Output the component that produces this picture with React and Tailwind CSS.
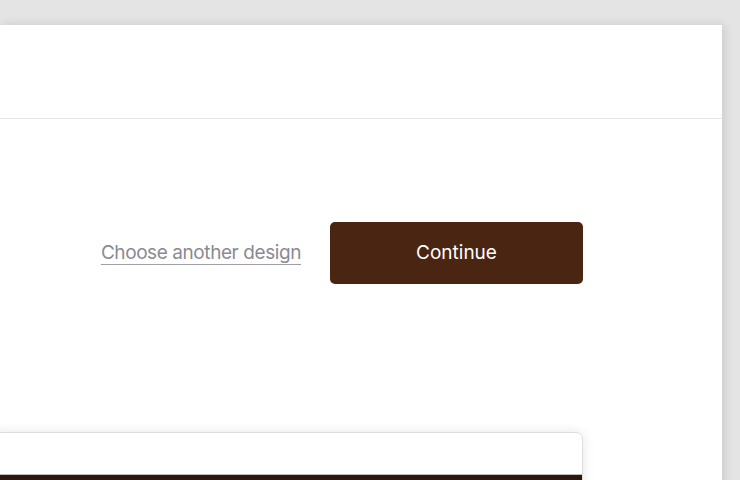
import React from 'react';

export default function App() {
  return (
    <div className="h-[480px] w-[740px] overflow-hidden bg-[#e4e4e4] pt-[25px] font-['Inter',sans-serif]">
      <div className="h-[500px] w-[722px] bg-white shadow-[2px_0_10px_rgba(0,0,0,0.12)]">
        {/* header */}
        <div className="h-[94px] border-b border-[#e6e6e6]" />

        {/* actions */}
        <div className="flex items-center justify-end pr-[139px] pt-[103px]">
          <a href="#" className="text-[19px] tracking-[-0.022em] text-[#8a8a93] underline decoration-[#a0a0a6] underline-offset-[5px]">
            Choose another design
          </a>
          <button className="ml-[29px] h-[62px] w-[253px] rounded-[5px] bg-[#4a2511] text-[19px] text-white">
            Continue
          </button>
        </div>

        {/* preview card */}
        <div className="mt-[148px] mr-[139px] ml-[-10px] overflow-hidden rounded-t-[7px] border border-[#dedede] bg-white shadow-[0_0_12px_rgba(0,0,0,0.1)]">
          <div className="h-[42px] border-b border-[#bdbdbd]" />
          <div className="h-[40px] bg-[#2b180c]" />
        </div>
      </div>
    </div>
  );
}
